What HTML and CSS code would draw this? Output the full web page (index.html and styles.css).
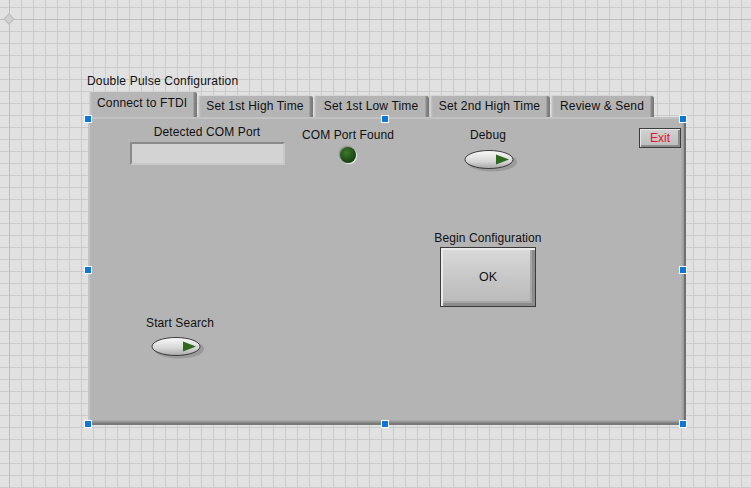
FILE: index.html
```html
<!DOCTYPE html>
<html>
<head>
<meta charset="utf-8">
<link rel="stylesheet" href="styles.css">
</head>
<body>
<div class="origin"></div>
<div class="vi">
  <div class="title">Double Pulse Configuration</div>
  <div class="tabs">
    <div class="tab active w1">Connect to FTDI</div>
    <div class="tab w2">Set 1st High Time</div>
    <div class="tab w3">Set 1st Low Time</div>
    <div class="tab w4">Set 2nd High Time</div>
    <div class="tab w5">Review &amp; Send</div>
  </div>
  <div class="page">
    <div class="ctl com">
      <div class="lbl">Detected COM Port</div>
      <div class="strbox"></div>
    </div>
    <div class="ctl found">
      <div class="lbl">COM Port Found</div>
      <div class="led"></div>
    </div>
    <div class="ctl debug">
      <div class="lbl">Debug</div>
      <svg class="toggle" width="54" height="24" viewBox="0 0 54 24">
        <defs>
          <linearGradient id="tg1" x1="0" y1="0" x2="0" y2="1">
            <stop offset="0" stop-color="#fafafa"/>
            <stop offset="0.6" stop-color="#d6d6d6"/>
            <stop offset="1" stop-color="#a8a8a8"/>
          </linearGradient>
        </defs>
        <ellipse cx="28" cy="13" rx="25" ry="9.5" fill="#8e8e8e" opacity="0.7"/>
        <ellipse cx="25" cy="10.5" rx="24" ry="9" fill="url(#tg1)" stroke="#3a3a3a" stroke-width="1"/>
        <path d="M32 5.5 L45 10.5 L32 15.5 Z" fill="#2f6a1c"/>
      </svg>
    </div>
    <div class="ctl begin">
      <div class="lbl">Begin Configuration</div>
      <div class="okbtn">OK</div>
    </div>
    <div class="ctl start">
      <div class="lbl">Start Search</div>
      <svg class="toggle" width="54" height="24" viewBox="0 0 54 24">
        <defs>
          <linearGradient id="tg2" x1="0" y1="0" x2="0" y2="1">
            <stop offset="0" stop-color="#fafafa"/>
            <stop offset="0.6" stop-color="#d6d6d6"/>
            <stop offset="1" stop-color="#a8a8a8"/>
          </linearGradient>
        </defs>
        <ellipse cx="28" cy="13" rx="25" ry="9.5" fill="#8e8e8e" opacity="0.7"/>
        <ellipse cx="25" cy="10.5" rx="24" ry="9" fill="url(#tg2)" stroke="#3a3a3a" stroke-width="1"/>
        <path d="M32 5.5 L45 10.5 L32 15.5 Z" fill="#2f6a1c"/>
      </svg>
    </div>
    <div class="ctl exit"><div class="exitbtn">Exit</div></div>
  </div>
  <span class="h h1"></span><span class="h h2"></span><span class="h h3"></span>
  <span class="h h4"></span><span class="h h5"></span>
  <span class="h h6"></span><span class="h h7"></span><span class="h h8"></span>
</div>
</body>
</html>
```
FILE: styles.css
```css
html, body {
  margin: 0;
  padding: 0;
}
body {
  width: 751px;
  height: 488px;
  overflow: hidden;
  position: relative;
  font-family: "Liberation Sans", Arial, sans-serif;
  font-size: 12px;
  color: #111;
  background-color: #e1e1e1;
  background-image:
    linear-gradient(to right, #bdbdbd 1px, transparent 1px),
    linear-gradient(to bottom, #bdbdbd 1px, transparent 1px),
    linear-gradient(to right, #cacaca 1px, transparent 1px),
    linear-gradient(to bottom, #cacaca 1px, transparent 1px);
  background-size: 751px 488px, 751px 488px, 12px 12px, 12px 12px;
  background-position: 9px 0, 0 19px, 9px 7px, 9px 7px;
  background-repeat: no-repeat, no-repeat, repeat, repeat;
  padding: 74px 0 0 88px;
  box-sizing: border-box;
}
.origin {
  position: absolute;
  left: 5px;
  top: 15px;
  width: 6px;
  height: 6px;
  background: #cfcfcf;
  border: 1px solid #bdbdbd;
  transform: rotate(45deg);
}
.vi {
  position: relative;
  width: 598px;
}
.title {
  height: 14px;
  line-height: 14px;
  letter-spacing: 0.2px;
  margin-bottom: 3px;
  margin-left: -1px;
}
.tabs {
  display: flex;
  align-items: flex-end;
  gap: 1px;
  height: 26px;
  padding-left: 1px;
}
.tab {
  height: 22px;
  box-sizing: border-box;
  background: linear-gradient(to right, #c4c4c4 0, #b4b4b4 2px, #b4b4b4 calc(100% - 4px), #8c8c8c calc(100% - 3px), #7a7a7a calc(100% - 1px));
  border-top: 1px solid #d6d6d6;
  border-left: 1px solid #d0d0d0;
  border-top-right-radius: 3px;
  border-top-left-radius: 2px;
  line-height: 20px;
  text-align: center;
  letter-spacing: 0.15px;
  padding-right: 2px;
}
.tab.active {
  height: 26px;
  line-height: 22px;
  text-align: left;
  padding-left: 7px;
  background: linear-gradient(to right, #c6c6c6 0, #b6b6b6 2px, #b6b6b6 calc(100% - 4px), #8c8c8c calc(100% - 3px), #7a7a7a calc(100% - 1px));
}
.w1 { width: 108px; }
.w2 { width: 115px; }
.w3 { width: 115px; }
.w4 { width: 120px; }
.w5 { width: 103px; }
.page {
  position: relative;
  height: 308px;
  box-sizing: border-box;
  background: #b4b4b4;
  border-top: 2px solid #c2c2c2;
  border-left: 2px solid #c4c4c4;
  box-shadow: inset -1px 0 #9c9c9c, inset -2px 0 #a6a6a6, inset -3px 0 #acacac, inset 0 -1px #8a8a8a, inset 0 -2px #9a9a9a, inset 0 -3px #a8a8a8;
  border-right: 2px solid #6f6f6f;
  border-bottom: 2px solid #7a7a7a;
}
.ctl {
  position: absolute;
  display: flex;
  flex-direction: column;
  align-items: center;
}
.lbl {
  line-height: 14px;
  white-space: nowrap;
  letter-spacing: 0.1px;
}
.com { left: 39px; top: 6px; width: 156px; }
.strbox {
  margin-top: 3px;
  width: 155px;
  height: 23px;
  box-sizing: border-box;
  background: #d3d3d3;
  border-top: 2px solid #8a8a8a;
  border-left: 2px solid #8a8a8a;
  border-right: 2px solid #c9c9c9;
  border-bottom: 2px solid #c9c9c9;
}
.found { left: 211px; top: 9px; width: 94px; }
.led {
  margin-top: 5px;
  width: 16px;
  height: 16px;
  border-radius: 50%;
  background: radial-gradient(circle at 40% 35%, #3d7a2a 0, #25561a 45%, #143a0e 80%);
  box-shadow: 1px 1px 1px #efefef, -1px -1px 1px #8a8a8a;
}
.debug { left: 371px; top: 9px; width: 54px; }
.debug .toggle { margin-top: 7px; margin-left: 6px; }
.start { left: 55px; top: 197px; width: 70px; }
.start .toggle { margin-top: 6px; margin-left: -4px; }
.begin { left: 342px; top: 112px; width: 112px; }
.okbtn {
  margin-top: 2px;
  width: 96px;
  height: 60px;
  box-sizing: border-box;
  border: 1px solid #3c3c3c;
  background: linear-gradient(to bottom, #dadada, #c4c4c4 60%, #b8b8b8);
  box-shadow: inset 2px 2px 0 #ececec, inset -3px -3px 0 #8c8c8c, inset -5px -5px 0 #a6a6a6;
  display: flex;
  align-items: center;
  justify-content: center;
  font-size: 12.5px;
}
.exit { left: 549px; top: 9px; }
.exitbtn {
  width: 42px;
  height: 20px;
  box-sizing: border-box;
  border: 1px solid #3c3c3c;
  background: linear-gradient(to bottom, #d2d2d2, #bcbcbc);
  box-shadow: inset 1px 1px 0 #e6e6e6, inset -2px -2px 0 #8c8c8c;
  color: #e8102a;
  text-align: center;
  line-height: 18px;
}
.h {
  position: absolute;
  width: 8px;
  height: 8px;
  box-sizing: border-box;
  background: #0a78d6;
  border: 1px solid #ffffff;
}
.h1 { left: -4px; top: 41px; }
.h2 { left: 293px; top: 41px; }
.h3 { left: 591px; top: 41px; }
.h4 { left: -4px; top: 192px; }
.h5 { left: 591px; top: 192px; }
.h6 { left: -4px; top: 346px; }
.h7 { left: 293px; top: 346px; }
.h8 { left: 591px; top: 346px; }
```
